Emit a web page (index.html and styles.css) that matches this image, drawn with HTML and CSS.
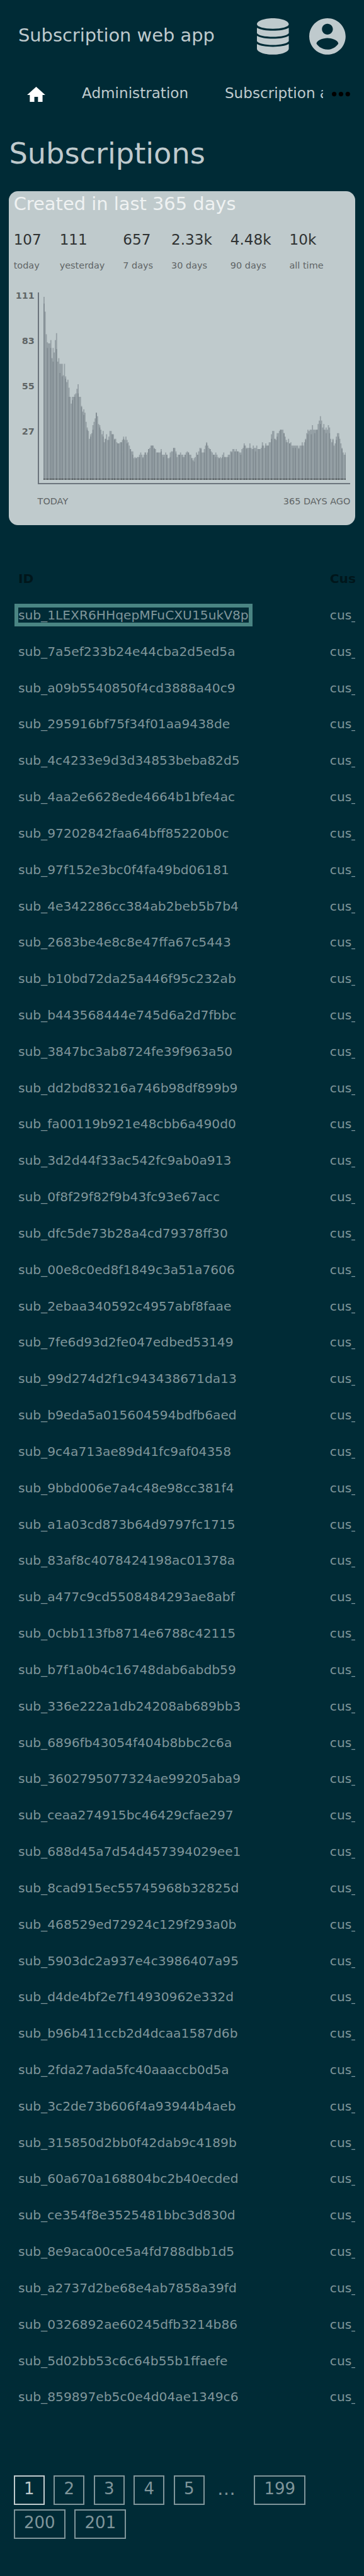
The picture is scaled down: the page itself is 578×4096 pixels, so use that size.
FILE: index.html
```html
<!DOCTYPE html>
<html lang="en">
<head>
<meta charset="utf-8">
<title>Subscriptions</title>
<link rel="stylesheet" href="styles.css">
</head>
<body>
<div class="page">
  <header class="topbar">
    <span class="brand">Subscription web app</span>
    <svg class="icon-db" viewBox="0 0 448 512"><path d="M0 85C0 38 100 0 224 0s224 38 224 85v0c0 37-100 64-224 64S0 122 0 85zM0 135c45 28 134 40 224 40s179-12 224-40v76c-20 32-112 51-224 51S20 243 0 211zM0 248c45 28 134 41 224 41s179-13 224-41v76c-20 32-112 53-224 53S20 356 0 324zM0 364c45 28 134 38 224 38s179-10 224-38v63c0 47-100 85-224 85S0 474 0 427z"/></svg>
    <svg class="icon-user" viewBox="2 2 20 20"><path fill-rule="evenodd" d="M12 2C6.480 2 2 6.480 2 12s4.480 10 10 10 10-4.480 10-10S17.520 2 12 2zm0 3c1.660 0 3 1.340 3 3s-1.340 3-3 3-3-1.340-3-3 1.340-3 3-3zm0 14.200c-2.500 0-4.710-1.280-6-3.220.03-1.990 4-3.080 6-3.080 1.990 0 5.970 1.090 6 3.080-1.290 1.940-3.500 3.220-6 3.220z"/></svg>
  </header>

  <nav class="nav">
    <svg class="icon-home" viewBox="2 3 20 17"><path d="M10 20v-6h4v6h5v-8h3L12 3 2 12h3v8z"/></svg>
    <div class="nav-links">
      <span class="nav-link">Administration</span>
      <span class="nav-link">Subscription a</span>
    </div>
    <svg class="icon-more" viewBox="0 0 16 4"><circle cx="2" cy="2" r="2"/><circle cx="8" cy="2" r="2"/><circle cx="14" cy="2" r="2"/></svg>
  </nav>

  <h1 class="heading">Subscriptions</h1>

  <section class="card">
    <h2 class="card-title">Created in last 365 days</h2>
    <div class="stats">
      <div class="stat"><div class="num">107</div><div class="lbl">today</div></div>
      <div class="stat"><div class="num">111</div><div class="lbl">yesterday</div></div>
      <div class="stat"><div class="num">657</div><div class="lbl">7 days</div></div>
      <div class="stat"><div class="num">2.33k</div><div class="lbl">30 days</div></div>
      <div class="stat"><div class="num">4.48k</div><div class="lbl">90 days</div></div>
      <div class="stat"><div class="num">10k</div><div class="lbl">all time</div></div>
    </div>
    <div class="chart">
      <div class="y-axis"><span>111</span><span>83</span><span>55</span><span>27</span></div>
      <div class="plot"><svg id="bars" class="bars" viewBox="0 0 266 161"></svg></div>
    </div>
    <div class="x-axis"><span>TODAY</span><span>365 DAYS AGO</span></div>
  </section>

  <div class="table">
    <div class="row head"><span>ID</span><span>Cus</span></div>
    <div class="row"><span><a class="focused">sub_1LEXR6HHqepMFuCXU15ukV8p</a></span><span>cus_</span></div>
    <div class="row"><span>sub_7a5ef233b24e44cba2d5ed5a</span><span>cus_</span></div>
    <div class="row"><span>sub_a09b5540850f4cd3888a40c9</span><span>cus_</span></div>
    <div class="row"><span>sub_295916bf75f34f01aa9438de</span><span>cus_</span></div>
    <div class="row"><span>sub_4c4233e9d3d34853beba82d5</span><span>cus_</span></div>
    <div class="row"><span>sub_4aa2e6628ede4664b1bfe4ac</span><span>cus_</span></div>
    <div class="row"><span>sub_97202842faa64bff85220b0c</span><span>cus_</span></div>
    <div class="row"><span>sub_97f152e3bc0f4fa49bd06181</span><span>cus_</span></div>
    <div class="row"><span>sub_4e342286cc384ab2beb5b7b4</span><span>cus_</span></div>
    <div class="row"><span>sub_2683be4e8c8e47ffa67c5443</span><span>cus_</span></div>
    <div class="row"><span>sub_b10bd72da25a446f95c232ab</span><span>cus_</span></div>
    <div class="row"><span>sub_b443568444e745d6a2d7fbbc</span><span>cus_</span></div>
    <div class="row"><span>sub_3847bc3ab8724fe39f963a50</span><span>cus_</span></div>
    <div class="row"><span>sub_dd2bd83216a746b98df899b9</span><span>cus_</span></div>
    <div class="row"><span>sub_fa00119b921e48cbb6a490d0</span><span>cus_</span></div>
    <div class="row"><span>sub_3d2d44f33ac542fc9ab0a913</span><span>cus_</span></div>
    <div class="row"><span>sub_0f8f29f82f9b43fc93e67acc</span><span>cus_</span></div>
    <div class="row"><span>sub_dfc5de73b28a4cd79378ff30</span><span>cus_</span></div>
    <div class="row"><span>sub_00e8c0ed8f1849c3a51a7606</span><span>cus_</span></div>
    <div class="row"><span>sub_2ebaa340592c4957abf8faae</span><span>cus_</span></div>
    <div class="row"><span>sub_7fe6d93d2fe047edbed53149</span><span>cus_</span></div>
    <div class="row"><span>sub_99d274d2f1c943438671da13</span><span>cus_</span></div>
    <div class="row"><span>sub_b9eda5a015604594bdfb6aed</span><span>cus_</span></div>
    <div class="row"><span>sub_9c4a713ae89d41fc9af04358</span><span>cus_</span></div>
    <div class="row"><span>sub_9bbd006e7a4c48e98cc381f4</span><span>cus_</span></div>
    <div class="row"><span>sub_a1a03cd873b64d9797fc1715</span><span>cus_</span></div>
    <div class="row"><span>sub_83af8c4078424198ac01378a</span><span>cus_</span></div>
    <div class="row"><span>sub_a477c9cd5508484293ae8abf</span><span>cus_</span></div>
    <div class="row"><span>sub_0cbb113fb8714e6788c42115</span><span>cus_</span></div>
    <div class="row"><span>sub_b7f1a0b4c16748dab6abdb59</span><span>cus_</span></div>
    <div class="row"><span>sub_336e222a1db24208ab689bb3</span><span>cus_</span></div>
    <div class="row"><span>sub_6896fb43054f404b8bbc2c6a</span><span>cus_</span></div>
    <div class="row"><span>sub_3602795077324ae99205aba9</span><span>cus_</span></div>
    <div class="row"><span>sub_ceaa274915bc46429cfae297</span><span>cus_</span></div>
    <div class="row"><span>sub_688d45a7d54d457394029ee1</span><span>cus_</span></div>
    <div class="row"><span>sub_8cad915ec55745968b32825d</span><span>cus_</span></div>
    <div class="row"><span>sub_468529ed72924c129f293a0b</span><span>cus_</span></div>
    <div class="row"><span>sub_5903dc2a937e4c3986407a95</span><span>cus_</span></div>
    <div class="row"><span>sub_d4de4bf2e7f14930962e332d</span><span>cus_</span></div>
    <div class="row"><span>sub_b96b411ccb2d4dcaa1587d6b</span><span>cus_</span></div>
    <div class="row"><span>sub_2fda27ada5fc40aaaccb0d5a</span><span>cus_</span></div>
    <div class="row"><span>sub_3c2de73b606f4a93944b4aeb</span><span>cus_</span></div>
    <div class="row"><span>sub_315850d2bb0f42dab9c4189b</span><span>cus_</span></div>
    <div class="row"><span>sub_60a670a168804bc2b40ecded</span><span>cus_</span></div>
    <div class="row"><span>sub_ce354f8e3525481bbc3d830d</span><span>cus_</span></div>
    <div class="row"><span>sub_8e9aca00ce5a4fd788dbb1d5</span><span>cus_</span></div>
    <div class="row"><span>sub_a2737d2be68e4ab7858a39fd</span><span>cus_</span></div>
    <div class="row"><span>sub_0326892ae60245dfb3214b86</span><span>cus_</span></div>
    <div class="row"><span>sub_5d02bb53c6c64b55b1ffaefe</span><span>cus_</span></div>
    <div class="row"><span>sub_859897eb5c0e4d04ae1349c6</span><span>cus_</span></div>
  </div>

  <div class="pager">
    <span class="pg current">1</span><span class="pg">2</span><span class="pg">3</span><span class="pg">4</span><span class="pg">5</span><span class="gap">…</span><span class="pg">199</span><span class="pg">200</span><span class="pg">201</span>
  </div>
</div>
<script src="chart.js"></script>
</body>
</html>
```

FILE: styles.css
```css
html, body {
  margin: 0;
  background: #002b36;
}

.page {
  zoom: 1.80625;
  width: 320px;
  height: 2267.6px;
  overflow: hidden;
  background: #002b36;
  color: #bfcacd;
  font-family: "DejaVu Sans", sans-serif;
  font-size: 16px;
}

svg { display: block; flex: none; }

.topbar {
  display: flex;
  align-items: center;
  height: 64px;
  padding: 0 16px;
  fill: #bfcacd;
}
.brand { flex: 1; line-height: 32px; padding-bottom: 1px; }
.icon-db { width: 28px; height: 32px; margin-right: 18px; }
.icon-user { width: 32px; height: 32px; }

.nav {
  display: flex;
  align-items: center;
  height: 38px;
  padding: 0 12px 0 24px;
  font-size: 12.8px;
}
.icon-home { width: 16px; height: 13.6px; fill: #fff; }
.nav-links {
  display: flex;
  gap: 32px;
  width: 212px;
  margin-left: 32px;
  overflow: hidden;
  white-space: nowrap;
  line-height: 20px;
  padding-bottom: 2.6px;
}
.icon-more { width: 16px; height: 4px; margin-left: 8px; fill: #000; }

.heading {
  margin: 0;
  padding: 17px 8px 16.1px;
  height: 33px;
  line-height: 33px;
  font-size: 25.6px;
  font-weight: 400;
}

.card {
  box-sizing: border-box;
  height: 294.2px;
  margin: 0 8px;
  padding: 2px 4px 0;
  border-radius: 8px;
  background: #bfcacc;
  color: #5f6566;
  overflow: hidden;
}
.card-title {
  margin: 0;
  height: 19px;
  line-height: 19px;
  font-size: 16px;
  font-weight: 400;
  color: #eff2f2;
}
.stats { display: flex; gap: 16px; margin-top: 12px; }
.num { height: 20px; line-height: 20px; font-size: 12.8px; color: #303333; }
.lbl { height: 10px; margin-top: 7.5px; line-height: 10px; font-size: 8px; }
.chart { display: flex; gap: 2.6px; margin-top: 18.6px; }
.y-axis {
  display: flex;
  flex-direction: column;
  width: 18.4px;
  text-align: right;
  font-size: 8px;
  font-weight: 700;
}
.y-axis span { height: 40px; line-height: 6.5px; }
.plot {
  box-sizing: border-box;
  width: 275px;
  height: 169.1px;
  padding: 4px 4px 4px;
  border: solid #6c757d;
  border-width: 0 0 1.15px 1.15px;
}
.bars { width: 266px; height: 161px; }
.bar-fill { fill: #6c757d; fill-opacity: .5; }
.bar-base { fill: #000; fill-opacity: .27; }
.x-axis {
  display: flex;
  justify-content: space-between;
  margin: 10.2px 0 0 21px;
  line-height: 10px;
  font-size: 8px;
}

.table {
  margin: 31.6px 8px 0;
  padding-left: 8px;
  overflow: hidden;
  font-size: 11.2px;
  color: #7f959a;
}
.row {
  display: grid;
  grid-template-columns: 274px 60px;
  height: 32.024px;
  line-height: 32px;
  white-space: nowrap;
}
.head { color: #00161b; font-weight: 700; }
.focused { outline: 3.35px solid #4a8583; }

.pager {
  display: flex;
  flex-wrap: wrap;
  gap: 4px 8px;
  width: 280px;
  margin: 52.4px 0 0 12px;
  font-size: 14.4px;
  color: #7f959a;
}
.pg {
  box-sizing: border-box;
  height: 26px;
  padding: 0 7.9px;
  border: 1.15px solid #7f959a;
  line-height: 22px;
}
.current { color: #bfcacd; border-color: #bfcacd; }
.gap { box-sizing: border-box; width: 27.4px; padding-left: 3.2px; font-size: 16px; line-height: 23.4px; }
```

FILE: chart.js
```js
// Bar heights, one value per column, newest day first.
const heights = [
  161,148,128,121,120,120,123,107,116,112,123,129,104,107,102,102,102,92,102,91,
  86,88,81,73,67,73,73,75,76,80,84,73,73,65,60,62,59,51,46,43,
  36,40,41,48,51,54,59,56,49,48,44,40,43,33,36,40,35,38,43,43,
  40,40,36,36,33,32,32,33,33,35,38,35,38,35,33,30,27,25,25,19,
  20,19,20,20,22,24,22,20,22,24,22,24,27,28,30,30,30,28,27,24,
  24,24,24,27,22,22,22,24,22,19,19,24,25,25,28,28,25,20,22,22,
  24,22,22,20,22,24,25,24,22,22,19,17,19,20,24,22,25,28,28,24,
  24,27,30,33,30,28,27,25,24,22,22,24,22,20,19,20,19,22,24,20,
  20,20,22,22,25,25,27,27,25,27,25,25,24,24,27,28,32,30,28,28,
  28,32,28,27,30,28,28,30,27,27,27,28,33,30,28,32,30,30,33,33,
  40,43,43,36,35,41,41,43,44,44,44,41,38,35,33,36,32,33,30,30,
  30,30,30,30,28,30,30,33,30,33,36,41,44,43,44,44,48,44,44,44,
  44,49,52,56,52,46,49,44,46,44,48,46,36,33,36,30,32,38,41,41,
  36,32,28,24,22,24
];

// Columns where two days overlap: [column, height of the overlap].
const overlaps = [
  [0,155],[3,116],[6,116],[8,104],[11,115],[14,94],[16,91],[19,89],[22,73],[25,70],
  [27,73],[30,76],[33,64],[35,57],[38,44],[41,38],[43,44],[46,59],[49,46],[52,38],
  [54,36],[57,35],[60,40],[62,35],[65,32],[68,33],[70,36],[73,32],[76,27],[78,22],
  [81,19],[84,20],[87,19],[89,24],[92,27],[95,30],[97,27],[100,24],[103,25],[105,20],
  [108,22],[111,20],[114,28],[116,23],[119,22],[122,20],[124,22],[127,24],[130,19],[132,16],
  [135,22],[138,27],[141,24],[143,32],[146,27],[149,22],[151,20],[154,19],[157,20],[159,20],
  [162,20],[165,24],[168,25],[170,25],[173,22],[176,30],[178,27],[181,28],[184,27],[186,25],
  [189,27],[192,30],[195,30],[197,30],[200,36],[203,36],[205,38],[208,44],[211,41],[213,33],
  [216,32],[219,28],[221,28],[224,27],[227,30],[230,35],[232,40],[235,40],[238,41],[240,44],
  [243,49],[246,44],[248,41],[251,41],[254,35],[257,35],[259,38],[262,27],[265,22]
];

const H = 161;
let outline = "M0 " + H;
heights.forEach((h, i) => { outline += "V" + (H - h) + "H" + (i + 1); });
outline += "V" + H + "Z";

const stripes = overlaps.map(([x, h]) => "M" + x + " " + H + "v-" + h + "h1v" + h + "z").join("");
const notches = overlaps.map(([x]) => "M" + x + " " + (H - 1) + "h1v1h-1z").join("");

const add = (d, cls) => {
  const p = document.createElementNS("http://www.w3.org/2000/svg", "path");
  p.setAttribute("d", d);
  p.setAttribute("class", cls);
  document.getElementById("bars").appendChild(p);
};
add(outline, "bar-fill");
add(stripes, "bar-fill");
add("M0 160H266V161H0Z", "bar-base");
add(notches, "bar-base");
```
